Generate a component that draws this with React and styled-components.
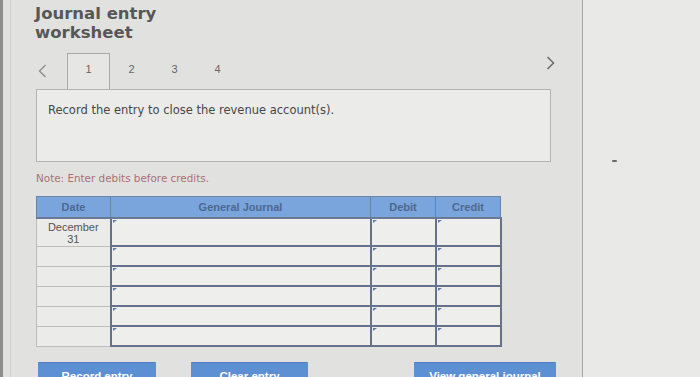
import styled, { createGlobalStyle } from "styled-components";

const rows = [
  { date: ["December", "31"], tall: true },
  { date: null },
  { date: null },
  { date: null },
  { date: null },
  { date: null },
];

export default function App() {
  return (
    <>
      <GlobalStyle />
      <Page>
        <Edge />
        <Main>
          <Title>
            Journal entry
            <br />
            worksheet
          </Title>
          <TabsRow>
            <Arrow>
              <svg width="9" height="14" viewBox="0 0 9 14">
                <path d="M7.5 1 L1.5 7 L7.5 13" fill="none" stroke="#8c8c8c" strokeWidth="1.4" />
              </svg>
            </Arrow>
            <Tab $active>1</Tab>
            <Tab>2</Tab>
            <Tab>3</Tab>
            <Tab>4</Tab>
            <NextArrow>
              <svg width="9" height="14" viewBox="0 0 9 14">
                <path d="M1.5 1 L7.5 7 L1.5 13" fill="none" stroke="#6e6e6e" strokeWidth="1.6" />
              </svg>
            </NextArrow>
          </TabsRow>
          <Instruction>Record the entry to close the revenue account(s).</Instruction>
          <Note>Note: Enter debits before credits.</Note>
          <Journal>
            <colgroup>
              <col style={{ width: 74 }} />
              <col style={{ width: 260 }} />
              <col style={{ width: 65 }} />
              <col style={{ width: 65 }} />
            </colgroup>
            <thead>
              <tr>
                <Head>Date</Head>
                <Head>General Journal</Head>
                <Head>Debit</Head>
                <Head>Credit</Head>
              </tr>
            </thead>
            <tbody>
              {rows.map((r, i) => (
                <Row key={i} $tall={r.tall}>
                  <DateCell>
                    {r.date && (
                      <>
                        {r.date[0]}
                        <br />
                        {r.date[1]}
                      </>
                    )}
                  </DateCell>
                  <InputCell />
                  <InputCell />
                  <InputCell />
                </Row>
              ))}
            </tbody>
          </Journal>
          <Buttons>
            <ActionButton $width={118} $offset={3}>Record entry</ActionButton>
            <ActionButton $width={117} $offset={35}>Clear entry</ActionButton>
            <ActionButton $width={142} $offset={106}>View general journal</ActionButton>
          </Buttons>
        </Main>
        <Side>
          <Speck />
        </Side>
      </Page>
    </>
  );
}

const GlobalStyle = createGlobalStyle`
  body {
    margin: 0;
    background: #e7e7e5;
    overflow: hidden;
  }
`;
const Page = styled.div`
  display: flex;
  height: 377px;
  overflow: hidden;
`;
const Edge = styled.div`
  width: 3px;
  background: #8e8e8e;
`;
const Main = styled.div`
  width: 547px;
  padding: 4px 0 0 32px;
  background: #e1e1df;
  border-right: 1px solid #a8a8a6;
  box-shadow: inset 7px 0 0 #e1e1df, inset 8px 0 0 #cfcfcd;
`;
const Side = styled.div`
  flex: 1;
  background: #e9e9e7;
  padding: 160px 0 0 29px;
`;
const Speck = styled.div`
  width: 5px;
  height: 2px;
  background: #6a6a6a;
  border-radius: 1px;
`;
const Title = styled.h1`
  margin: 0;
  font: 700 16.5px/19px "DejaVu Sans", Verdana, sans-serif;
  color: #575757;
`;
const TabsRow = styled.div`
  display: flex;
  align-items: flex-end;
  width: 520px;
  height: 36px;
  margin-top: 11px;
`;
const Arrow = styled.div`
  width: 32px;
  height: 36px;
  display: flex;
  align-items: center;
  padding-left: 3px;
  box-sizing: border-box;
`;
const NextArrow = styled(Arrow)`
  margin-left: auto;
  width: 12px;
  align-items: flex-start;
  padding-top: 3px;
`;
const Tab = styled.div`
  width: 43px;
  height: 36px;
  box-sizing: border-box;
  display: flex;
  align-items: center;
  justify-content: center;
  font: 11px "Liberation Sans", Arial, sans-serif;
  color: #666;
  border: 1px solid ${(p) => (p.$active ? "#a9a9a7" : "transparent")};
  border-bottom: none;
  background: ${(p) => (p.$active ? "#e6e6e4" : "transparent")};
  padding-bottom: 6px;
`;
const Instruction = styled.div`
  margin-left: 1px;
  width: 515px;
  height: 73px;
  box-sizing: border-box;
  padding: 13px 11px;
  border: 1px solid #b3b3b1;
  background: #ebebe9;
  font: 11.5px/14px "DejaVu Sans", Verdana, sans-serif;
  color: #474747;
`;
const Note = styled.div`
  margin: 10px 0 0 1px;
  font: 10.4px/12px "DejaVu Sans", Verdana, sans-serif;
  color: #ad6f76;
`;
const Journal = styled.table`
  margin: 12px 0 0 1px;
  width: 464px;
  border-collapse: collapse;
  table-layout: fixed;
`;
const Head = styled.th`
  height: 20px;
  padding: 0;
  background: #79a5dc;
  border: 1px solid #6d84a8;
  border-bottom: 2px solid #6a7a94;
  font: 700 11px "Liberation Sans", Arial, sans-serif;
  color: #4e6890;
  vertical-align: middle;
`;
const Row = styled.tr`
  height: ${(p) => (p.$tall ? "28px" : "20px")};
`;
const DateCell = styled.td`
  padding: 0;
  background: #ebebe9;
  border: 1px solid #bdbdbb;
  text-align: center;
  vertical-align: top;
  font: 11px/12px "Liberation Sans", Arial, sans-serif;
  color: #555;
  padding-top: 2px;
`;
const InputCell = styled.td`
  position: relative;
  padding: 0;
  background: #eeeeec;
  border: 2px solid #66728a;
  &::before {
    content: "";
    position: absolute;
    top: 1px;
    left: 1px;
    border-top: 3px solid #5a7db0;
    border-right: 4px solid transparent;
  }
`;
const Buttons = styled.div`
  display: flex;
  margin-top: 15px;
`;
const ActionButton = styled.button`
  width: ${(p) => p.$width}px;
  margin-left: ${(p) => p.$offset}px;
  height: 28px;
  flex: none;
  padding: 7px 0 0;
  align-self: flex-start;
  display: flex;
  justify-content: center;
  align-items: flex-start;
  background: #5d8fd3;
  border: none;
  border-top: 1px solid #4f7fc2;
  border-radius: 1px;
  font: 700 11.5px/12px "Liberation Sans", Arial, sans-serif;
  color: #fff;
`;
